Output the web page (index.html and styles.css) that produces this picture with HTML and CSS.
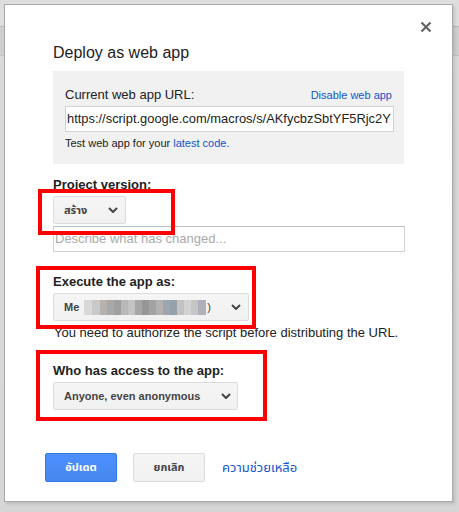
FILE: index.html
```html
<!DOCTYPE html>
<html lang="en">
<head>
<meta charset="utf-8">
<title>Deploy as web app</title>
<link rel="stylesheet" href="styles.css">
</head>
<body>
<div class="dialog">
  <div class="topbar">
    <svg class="close" width="12" height="12" viewBox="0 0 12 12"><path d="M1.5 1.5 L10.5 10.5 M10.5 1.5 L1.5 10.5" stroke="#666" stroke-width="2.3" stroke-linecap="butt"/></svg>
  </div>
  <h1 class="title">Deploy as web app</h1>
  <div class="urlbox">
    <div class="urlhead">
      <span class="urllabel">Current web app URL:</span>
      <a class="link small">Disable web app</a>
    </div>
    <div class="urlinput">https://script.google.com/macros/s/AKfycbzSbtYF5Rjc2Y</div>
    <div class="testline">Test web app for your <a class="link">latest code.</a></div>
  </div>

  <div class="label first">Project version:</div>
  <div class="select sel-version"><span class="selText">สร้าง</span><svg class="chev" width="10" height="6" viewBox="0 0 10 6"><path d="M1 1 L5 5 L9 1" fill="none" stroke="#444" stroke-width="2"/></svg></div>
  <div class="textinput">Describe what has changed...</div>

  <div class="label">Execute the app as:</div>
  <div class="select sel-exec"><span class="selText">Me</span><span class="mosaic"></span><span class="selText paren">)</span><svg class="chev" width="10" height="6" viewBox="0 0 10 6"><path d="M1 1 L5 5 L9 1" fill="none" stroke="#444" stroke-width="2"/></svg></div>
  <div class="note">You need to authorize the script before distributing the URL.</div>

  <div class="label">Who has access to the app:</div>
  <div class="select sel-access"><span class="selText">Anyone, even anonymous</span><svg class="chev" width="10" height="6" viewBox="0 0 10 6"><path d="M1 1 L5 5 L9 1" fill="none" stroke="#444" stroke-width="2"/></svg></div>

  <div class="buttons">
    <div class="btn btn-blue">อัปเดต</div>
    <div class="btn btn-gray">ยกเลิก</div>
    <a class="link helplink">ความช่วยเหลือ</a>
  </div>

  <div class="redbox rb1"></div>
  <div class="redbox rb2"></div>
  <div class="redbox rb3"></div>
</div>
</body>
</html>
```

FILE: styles.css
```css
html, body {
  margin: 0;
  padding: 0;
}
body {
  width: 459px;
  height: 512px;
  overflow: hidden;
  font-family: "Liberation Sans", Arial, "Noto Sans Thai", "Noto Sans", sans-serif;
  color: #222;
  background: linear-gradient(to bottom, #dedede 0, #dedede 26px, #bcbcbc 26px, #bcbcbc 27px, #cfcfcf 27px, #cfcfcf 55px, #c2c2c2 55px, #c2c2c2 56px, #dadada 56px, #d6d6d6 100%);
}
.dialog {
  position: relative;
  box-sizing: border-box;
  margin: 4px 0 0 4px;
  width: 449px;
  height: 498px;
  border: 1px solid #a9a9a9;
  background: #fff;
  padding: 17px 48px 0 48px;
  box-shadow: 2px 2px 3px rgba(0, 0, 0, 0.12);
}
.topbar {
  display: flex;
  justify-content: flex-end;
  height: 10px;
  margin-right: -28px;
}
.close {
  display: block;
  margin-top: -1px;
}
.title {
  margin: 11px 0 0 0;
  font-size: 16px;
  line-height: 20px;
  font-weight: normal;
  color: #222;
}
.urlbox {
  margin-top: 8px;
  background: #f1f1f1;
  padding: 16px 12px 14px 12px;
}
.urlhead {
  display: flex;
  justify-content: space-between;
  align-items: baseline;
  height: 16px;
}
.urllabel {
  font-size: 13px;
  line-height: 16px;
  color: #222;
}
.link {
  color: #15c;
  text-decoration: none;
}
.small {
  font-size: 11px;
}
.urlinput {
  margin-top: 3px;
  margin-right: -2px;
  box-sizing: border-box;
  height: 26px;
  border: 1px solid #d2d2d2;
  background: #fff;
  font-size: 12.9px;
  line-height: 24px;
  padding-left: 1px;
  white-space: nowrap;
  overflow: hidden;
  color: #222;
}
.testline {
  margin-top: 5px;
  font-size: 11px;
  line-height: 13px;
  color: #222;
}
.label {
  margin-top: 22px;
  font-size: 13px;
  line-height: 16px;
  font-weight: bold;
  color: #222;
}
.label.first {
  margin-top: 13px;
}
.select {
  margin-top: 3px;
  box-sizing: border-box;
  height: 28px;
  display: flex;
  align-items: center;
  padding: 0 7px 0 10px;
  background: linear-gradient(#f5f5f5, #f1f1f1);
  border: 1px solid #dcdcdc;
  border-radius: 2px;
  font-size: 11px;
  font-weight: bold;
  color: #444;
}
.selText {
  line-height: 14px;
}
.chev {
  display: block;
  margin-left: auto;
}
.sel-version {
  width: 73px;
}
.sel-exec {
  width: 196px;
}
.sel-access {
  width: 185px;
  padding-right: 6px;
}
.mosaic {
  display: block;
  width: 122px;
  height: 15px;
  margin-left: 5px;
  background:
    linear-gradient(to right,
      #d8d8d8 0 8px, #c9c9c9 8px 16px, #b7b1ad 16px 23px, #a9a9a9 23px 30px,
      #9f9f9f 30px 37px, #b8b8b8 37px 44px, #c4c4c4 44px 51px, #a6a6a6 51px 58px,
      #969696 58px 65px, #a3a3a3 65px 72px, #b2b2b2 72px 79px, #9ea6ae 79px 86px,
      #96a0aa 86px 93px, #c2c2c2 93px 100px, #d3d3d3 100px 107px, #c6c6c6 107px 114px,
      #aeb0bc 114px 122px);
}
.paren {
  margin-left: 1px;
  font-weight: normal;
}
.textinput {
  margin-top: 2px;
  box-sizing: border-box;
  height: 26px;
  width: 352px;
  border: 1px solid #d2d2d2;
  border-top-color: #c0c0c0;
  font-size: 13px;
  line-height: 24px;
  padding-left: 1px;
  color: #aaa;
}
.note {
  margin-top: 4px;
  font-size: 13px;
  line-height: 16px;
  color: #222;
  padding-left: 1px;
}
.buttons {
  margin-top: 43px;
  margin-left: -8px;
  display: flex;
  align-items: center;
}
.btn {
  box-sizing: border-box;
  height: 29px;
  width: 72px;
  display: flex;
  align-items: center;
  justify-content: center;
  border-radius: 2px;
  font-size: 11px;
  font-weight: bold;
}
.btn-blue {
  background: linear-gradient(#4d90fe, #4787ed);
  border: 1px solid #3079ed;
  color: #fff;
}
.btn-gray {
  margin-left: 16px;
  background: linear-gradient(#f5f5f5, #f1f1f1);
  border: 1px solid #dcdcdc;
  color: #444;
}
.helplink {
  margin-left: 17px;
  font-size: 13px;
}
.redbox {
  position: absolute;
  box-sizing: border-box;
  border: 4px solid #f00;
}
.rb1 {
  left: 33px;
  top: 184px;
  width: 137px;
  height: 46px;
}
.rb2 {
  left: 31px;
  top: 261px;
  width: 220px;
  height: 63px;
}
.rb3 {
  left: 31px;
  top: 345px;
  width: 231px;
  height: 71px;
}
```
